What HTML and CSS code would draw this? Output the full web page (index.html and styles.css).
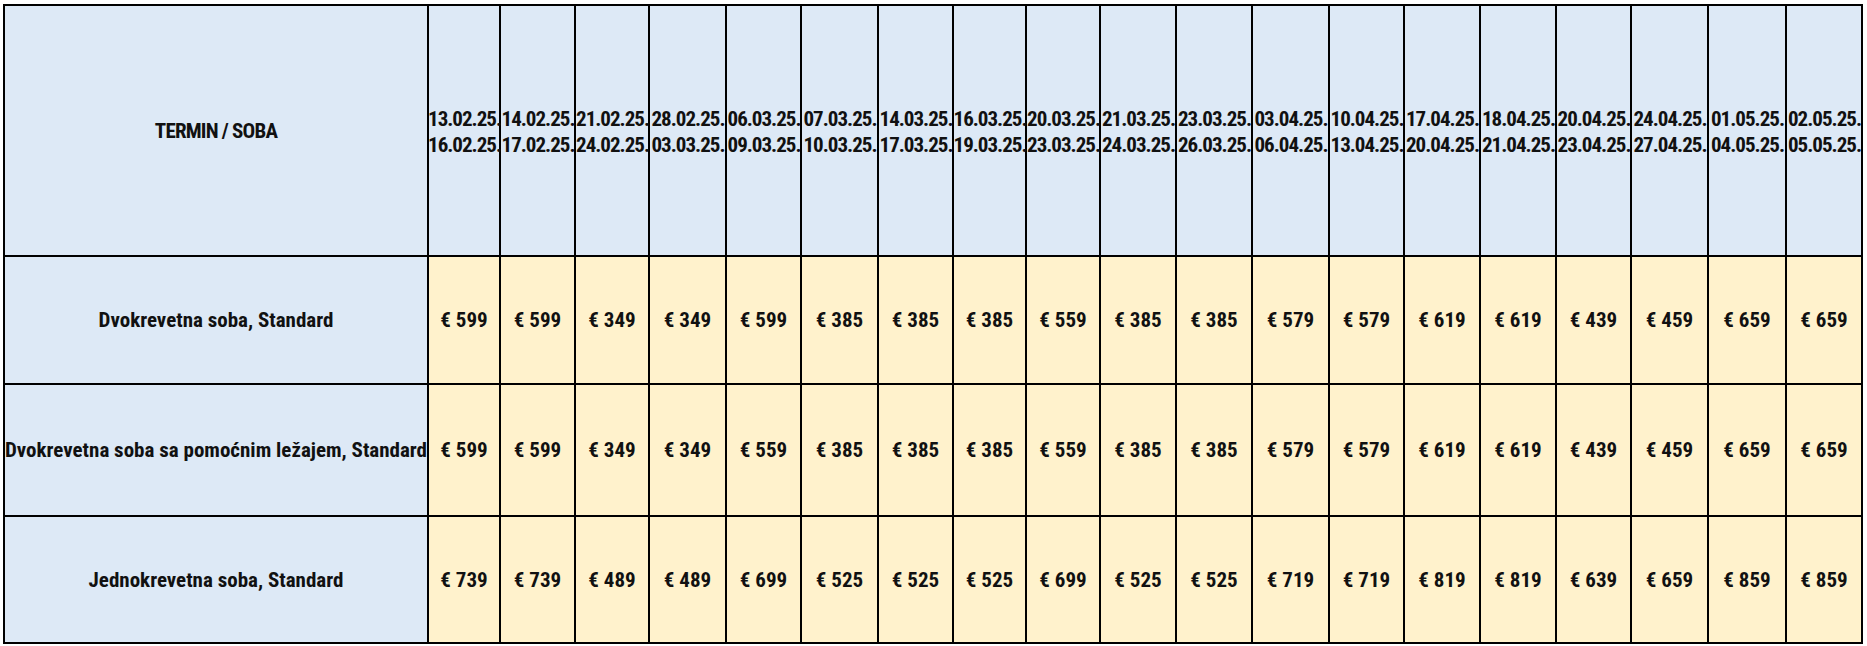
FILE: index.html
```html
<!DOCTYPE html>
<html lang="hr">
<head>
<meta charset="utf-8">
<title>Cjenik</title>
<link rel="stylesheet" href="styles.css">
</head>
<body>
<div class="price-table">
  <div class="cell head label corner">TERMIN / SOBA</div>
  <div class="cell head date">13.02.25.<br>16.02.25.</div>
  <div class="cell head date">14.02.25.<br>17.02.25.</div>
  <div class="cell head date">21.02.25.<br>24.02.25.</div>
  <div class="cell head date">28.02.25.<br>03.03.25.</div>
  <div class="cell head date">06.03.25.<br>09.03.25.</div>
  <div class="cell head date">07.03.25.<br>10.03.25.</div>
  <div class="cell head date">14.03.25.<br>17.03.25.</div>
  <div class="cell head date">16.03.25.<br>19.03.25.</div>
  <div class="cell head date">20.03.25.<br>23.03.25.</div>
  <div class="cell head date">21.03.25.<br>24.03.25.</div>
  <div class="cell head date">23.03.25.<br>26.03.25.</div>
  <div class="cell head date">03.04.25.<br>06.04.25.</div>
  <div class="cell head date">10.04.25.<br>13.04.25.</div>
  <div class="cell head date">17.04.25.<br>20.04.25.</div>
  <div class="cell head date">18.04.25.<br>21.04.25.</div>
  <div class="cell head date">20.04.25.<br>23.04.25.</div>
  <div class="cell head date">24.04.25.<br>27.04.25.</div>
  <div class="cell head date">01.05.25.<br>04.05.25.</div>
  <div class="cell head date">02.05.25.<br>05.05.25.</div>

  <div class="cell room label">Dvokrevetna soba, Standard</div>
  <div class="cell price">€ 599</div>
  <div class="cell price">€ 599</div>
  <div class="cell price">€ 349</div>
  <div class="cell price">€ 349</div>
  <div class="cell price">€ 599</div>
  <div class="cell price">€ 385</div>
  <div class="cell price">€ 385</div>
  <div class="cell price">€ 385</div>
  <div class="cell price">€ 559</div>
  <div class="cell price">€ 385</div>
  <div class="cell price">€ 385</div>
  <div class="cell price">€ 579</div>
  <div class="cell price">€ 579</div>
  <div class="cell price">€ 619</div>
  <div class="cell price">€ 619</div>
  <div class="cell price">€ 439</div>
  <div class="cell price">€ 459</div>
  <div class="cell price">€ 659</div>
  <div class="cell price">€ 659</div>

  <div class="cell room label">Dvokrevetna soba sa pomoćnim ležajem, Standard</div>
  <div class="cell price">€ 599</div>
  <div class="cell price">€ 599</div>
  <div class="cell price">€ 349</div>
  <div class="cell price">€ 349</div>
  <div class="cell price">€ 559</div>
  <div class="cell price">€ 385</div>
  <div class="cell price">€ 385</div>
  <div class="cell price">€ 385</div>
  <div class="cell price">€ 559</div>
  <div class="cell price">€ 385</div>
  <div class="cell price">€ 385</div>
  <div class="cell price">€ 579</div>
  <div class="cell price">€ 579</div>
  <div class="cell price">€ 619</div>
  <div class="cell price">€ 619</div>
  <div class="cell price">€ 439</div>
  <div class="cell price">€ 459</div>
  <div class="cell price">€ 659</div>
  <div class="cell price">€ 659</div>

  <div class="cell room label">Jednokrevetna soba, Standard</div>
  <div class="cell price">€ 739</div>
  <div class="cell price">€ 739</div>
  <div class="cell price">€ 489</div>
  <div class="cell price">€ 489</div>
  <div class="cell price">€ 699</div>
  <div class="cell price">€ 525</div>
  <div class="cell price">€ 525</div>
  <div class="cell price">€ 525</div>
  <div class="cell price">€ 699</div>
  <div class="cell price">€ 525</div>
  <div class="cell price">€ 525</div>
  <div class="cell price">€ 719</div>
  <div class="cell price">€ 719</div>
  <div class="cell price">€ 819</div>
  <div class="cell price">€ 819</div>
  <div class="cell price">€ 639</div>
  <div class="cell price">€ 659</div>
  <div class="cell price">€ 859</div>
  <div class="cell price">€ 859</div>
</div>
</body>
</html>
```
FILE: styles.css
```css
html, body {
  margin: 0;
  padding: 0;
  background: #ffffff;
}

body {
  padding: 4px 0 0 3px;
  font-family: Roboto, "Liberation Sans", sans-serif;
  font-weight: 700;
  font-size: 21px;
  font-stretch: condensed;
  color: #111111;
}

.price-table {
  display: grid;
  width: max-content;
  grid-template-columns: 424px 72px 75px 74px 77px 75px 77px 75px 73px 74px 76px 76px 77px 75px 76px 76px 75px 77px 78px 76px;
  grid-template-rows: 251px 128px 132px 127px;
  border-left: 2px solid #000;
  border-top: 2px solid #000;
}

.cell {
  box-sizing: border-box;
  border-right: 2px solid #000;
  border-bottom: 2px solid #000;
  display: flex;
  align-items: center;
  justify-content: center;
  text-align: center;
  white-space: nowrap;
}

.head,
.room {
  background: #dde9f6;
}

.price {
  background: #fff2cc;
}

.corner {
  letter-spacing: -0.8px;
}

.date {
  letter-spacing: -1px;
  line-height: 26px;
  padding-top: 2px;
  padding-left: 1px;
}
```
